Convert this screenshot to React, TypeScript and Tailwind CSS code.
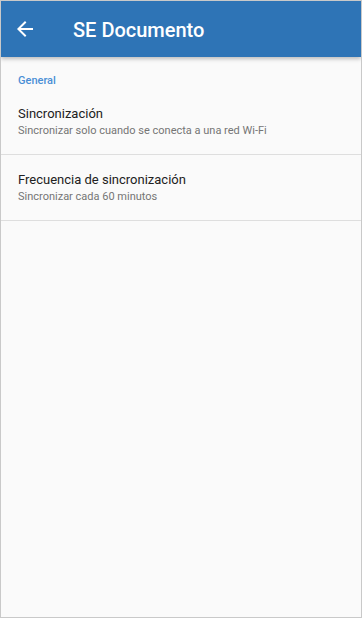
import React from "react";

function Item({ title, subtitle }: { title: string; subtitle: string }) {
  return (
    <div className="border-b border-[#dedede] pt-[16px] pb-[15px] pl-[17px] pr-4">
      <div className="text-[13px] leading-[18px] text-[#212121]">{title}</div>
      <div className="text-[11px] leading-[16px] text-[#757575]">{subtitle}</div>
    </div>
  );
}

export default function App() {
  return (
    <div
      className="w-[362px] h-[618px] border border-[#c9c9c9] bg-[#fafafa] flex flex-col overflow-hidden"
      style={{ fontFamily: "Roboto, 'Noto Sans', sans-serif" }}
    >
      <div className="h-[56px] bg-[#2e74b6] flex items-center shadow-[0_2px_4px_rgba(0,0,0,0.25)] relative z-10 shrink-0">
        <div className="w-[72px] pl-[12px] flex items-center">
          <svg width="24" height="24" viewBox="0 0 24 24" fill="white" className="mt-[-1px]">
            <path d="M20 11H7.83l5.59-5.59L12 4l-8 8 8 8 1.41-1.41L7.83 13H20v-2z" />
          </svg>
        </div>
        <div className="text-white text-[20px] leading-[28px] font-medium pt-[2px]">SE Documento</div>
      </div>
      <div className="pt-[16px] pl-[17px] text-[11px] leading-[16px] font-medium text-[#4a8fd6]">General</div>
      <div>
        <Item title="Sincronización" subtitle="Sincronizar solo cuando se conecta a una red Wi-Fi" />
        <Item title="Frecuencia de sincronización" subtitle="Sincronizar cada 60 minutos" />
      </div>
    </div>
  );
}
